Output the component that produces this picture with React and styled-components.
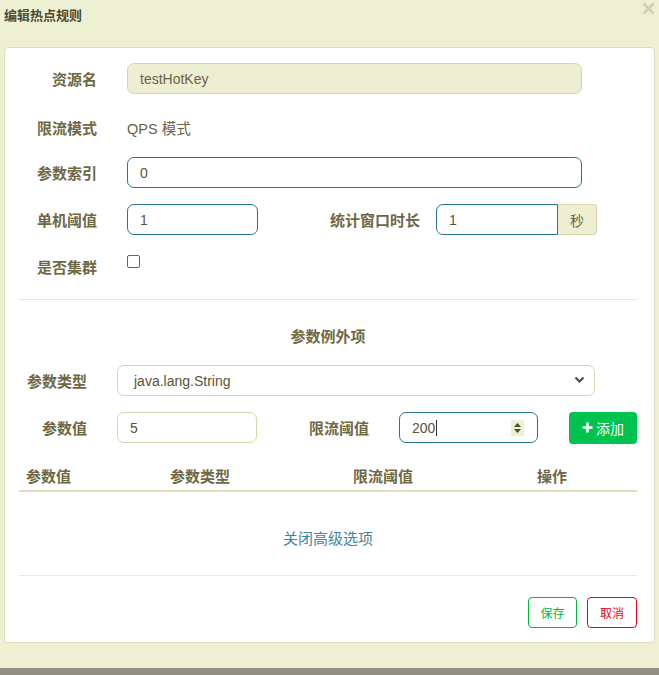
import React from "react";
import styled, { createGlobalStyle, css } from "styled-components";

const GlobalStyle = createGlobalStyle`
  html, body {
    margin: 0;
    padding: 0;
    background: #eef0d3;
  }
  body {
    font-family: "Liberation Sans", "Noto Sans CJK SC", sans-serif;
    font-size: 14px;
    color: #6a6344;
  }
`;

const Page = styled.div`
  width: 659px;
  height: 675px;
  display: flex;
  flex-direction: column;
  box-sizing: border-box;
`;

const Header = styled.div`
  height: 47px;
  display: flex;
  justify-content: space-between;
  align-items: flex-start;
  padding: 6px 4px 0 4px;
  box-sizing: border-box;
`;

const Title = styled.h4`
  margin: 0;
  font-size: 13px;
  font-weight: bold;
  color: #4e4a33;
  line-height: 18px;
  font-family: "Noto Sans CJK SC", sans-serif;
`;

const Close = styled.button`
  margin-top: -4px;
  border: none;
  background: none;
  padding: 0;
  display: flex;
`;

const Panel = styled.div`
  margin: 0 4px;
  height: 596px;
  background: #fff;
  border: 1px solid #e0ddbf;
  border-radius: 4px;
  box-sizing: border-box;
  padding: 15px 17px 0 14px;
  display: flex;
  flex-direction: column;
`;

const Form = styled.div`
  display: flex;
  flex-direction: column;
  gap: 16px;
`;

const Row = styled.div`
  display: flex;
  align-items: ${(p) => (p.$top ? "flex-start" : "center")};
  height: 31px;
  margin-top: ${(p) => p.$shift || 0}px;
`;

const Label = styled.label`
  width: ${(p) => p.$w}px;
  flex-shrink: 0;
  text-align: right;
  font-weight: bold;
  color: #6e6745;
  font-family: "Noto Sans CJK SC", sans-serif;
  font-size: 15px;
  margin-right: ${(p) => p.$gap}px;
  align-self: center;
`;

const Input = styled.div`
  box-sizing: border-box;
  width: ${(p) => p.$w}px;
  height: 31px;
  border: 1px solid #d9d6ad;
  border-radius: 7px;
  padding: 0 ${(p) => p.$pad || 12}px;
  display: flex;
  align-items: center;
  color: #5b5437;
  font-size: 14px;
  position: relative;
  background: #fff;
  ${(p) =>
    p.$readonly &&
    css`
      background: #eeeed3;
      color: #6a6344;
    `}
  ${(p) =>
    p.$focus &&
    css`
      border-color: #267591;
    `}
  ${(p) =>
    p.$left &&
    css`
      border-top-right-radius: 0;
      border-bottom-right-radius: 0;
    `}
`;

const Addon = styled.div`
  box-sizing: border-box;
  width: 39px;
  height: 31px;
  background: #eeeed3;
  border: 1px solid #d9d6ad;
  border-left: none;
  border-radius: 0 4px 4px 0;
  display: flex;
  align-items: center;
  justify-content: center;
  color: #6a6344;
  font-family: "Noto Sans CJK SC", sans-serif;
`;

const Plain = styled.span`
  color: #6a6344;
  font-size: 14.5px;
  font-family: "Liberation Sans", "Noto Sans CJK SC", sans-serif;
`;

const Checkbox = styled.span`
  display: block;
  width: 11px;
  height: 11px;
  border: 1px solid #6b6448;
  border-radius: 2px;
  margin-top: 4px;
`;

const Divider = styled.div`
  height: 1px;
  background: #ece9d2;
  margin: ${(p) => p.$m};
`;

const SectionTitle = styled.div`
  text-align: center;
  font-weight: bold;
  color: #6e6745;
  font-size: 15px;
  font-family: "Noto Sans CJK SC", sans-serif;
  line-height: 20px;
  margin: 26px 0 19px;
`;

const Spinner = styled.span`
  position: absolute;
  right: 13px;
  top: 7px;
  width: 13px;
  height: 16px;
  background: #eef0d3;
  display: flex;
  align-items: center;
  justify-content: center;
`;

const Caret = styled.span`
  display: inline-block;
  width: 1px;
  height: 16px;
  background: #333;
  margin-left: 1px;
`;

const Chevron = styled.span`
  position: absolute;
  right: 9px;
  top: 10px;
  display: flex;
`;

const AddButton = styled.button`
  margin-left: 31px;
  height: 32px;
  width: 68px;
  border: none;
  border-radius: 4px;
  background: #00c24f;
  color: #fff;
  font-size: 14px;
  font-family: "Noto Sans CJK SC", sans-serif;
  display: flex;
  align-items: center;
  justify-content: center;
  gap: 3px;
  padding: 0;
`;

const Table = styled.div`
  margin-top: 17px;
  display: grid;
  grid-template-columns: 144px 183px 184px 1fr;
  padding-left: 7px;
  height: 30px;
  align-items: center;
  border-bottom: 2px solid #deddbc;
  font-weight: bold;
  font-size: 15px;
  color: #6e6745;
  font-family: "Noto Sans CJK SC", sans-serif;
`;

const Toggle = styled.a`
  display: block;
  text-align: center;
  color: #3a86a2;
  font-size: 15px;
  font-family: "Noto Sans CJK SC", sans-serif;
  line-height: 20px;
  margin-top: 36px;
`;

const Footer = styled.div`
  display: flex;
  justify-content: flex-end;
  gap: 10px;
  margin-top: 21px;
`;

const OutlineButton = styled.button`
  width: ${(p) => p.$w}px;
  height: 31px;
  background: #fff;
  border: 1px solid ${(p) => p.$color};
  color: ${(p) => p.$color};
  border-radius: 4px;
  font-size: 12px;
  font-family: "Noto Sans CJK SC", sans-serif;
  padding: 0;
`;

const BottomBar = styled.div`
  margin-top: auto;
  height: 7px;
  background: #8f9080;
`;

export default function App() {
  return (
    <Page>
      <GlobalStyle />
      <Header>
        <Title>编辑热点规则</Title>
        <Close aria-label="close">
          <svg width="13" height="13" viewBox="0 0 13 13">
            <path d="M1.5 1.5 L11.5 11.5 M11.5 1.5 L1.5 11.5" stroke="#cfd0ad" strokeWidth="2.6" />
          </svg>
        </Close>
      </Header>
      <Panel>
        <Form>
          <Row>
            <Label $w={78} $gap={30}>资源名</Label>
            <Input $w={455} $readonly>testHotKey</Input>
          </Row>
          <Row $shift={2}>
            <Label $w={78} $gap={30}>限流模式</Label>
            <Plain>QPS 模式</Plain>
          </Row>
          <Row $shift={-2}>
            <Label $w={78} $gap={30}>参数索引</Label>
            <Input $w={455} $focus>0</Input>
          </Row>
          <Row>
            <Label $w={78} $gap={30}>单机阈值</Label>
            <Input $w={131} $focus>1</Input>
            <Label $w={162} $gap={16}>统计窗口时长</Label>
            <Input $w={122} $focus $left>1</Input>
            <Addon>秒</Addon>
          </Row>
          <Row $top>
            <Label $w={78} $gap={30}>是否集群</Label>
            <Checkbox />
          </Row>
        </Form>
        <Divider $m="17px 0 0 0" />
        <SectionTitle>参数例外项</SectionTitle>
        <Form>
          <Row>
            <Label $w={68} $gap={30}>参数类型</Label>
            <Input $w={478} $pad={16}>
              java.lang.String
              <Chevron>
                <svg width="11" height="8" viewBox="0 0 11 8">
                  <path d="M1.5 1.5 L5.5 5.5 L9.5 1.5" fill="none" stroke="#4e4a33" strokeWidth="2" />
                </svg>
              </Chevron>
            </Input>
          </Row>
          <Row>
            <Label $w={68} $gap={30}>参数值</Label>
            <Input $w={140}>5</Input>
            <Label $w={112} $gap={30}>限流阈值</Label>
            <Input $w={139} $focus>
              200
              <Caret />
              <Spinner>
                <svg width="9" height="12" viewBox="0 0 9 12">
                  <path d="M4.5 1 L8 5 L1 5 Z" fill="#4e4a33" />
                  <path d="M4.5 11 L8 7 L1 7 Z" fill="#4e4a33" />
                </svg>
              </Spinner>
            </Input>
            <AddButton>
              <svg width="11" height="11" viewBox="0 0 11 11">
                <path d="M5.5 0.5 V10.5 M0.5 5.5 H10.5" stroke="#fff" strokeWidth="2.6" />
              </svg>
              添加
            </AddButton>
          </Row>
        </Form>
        <Table>
          <span>参数值</span>
          <span>参数类型</span>
          <span>限流阈值</span>
          <span>操作</span>
        </Table>
        <Toggle>关闭高级选项</Toggle>
        <Divider $m="27px 0 0 0" />
        <Footer>
          <OutlineButton $w={49} $color="#00b842">保存</OutlineButton>
          <OutlineButton $w={50} $color="#e8001c">取消</OutlineButton>
        </Footer>
      </Panel>
      <BottomBar />
    </Page>
  );
}
